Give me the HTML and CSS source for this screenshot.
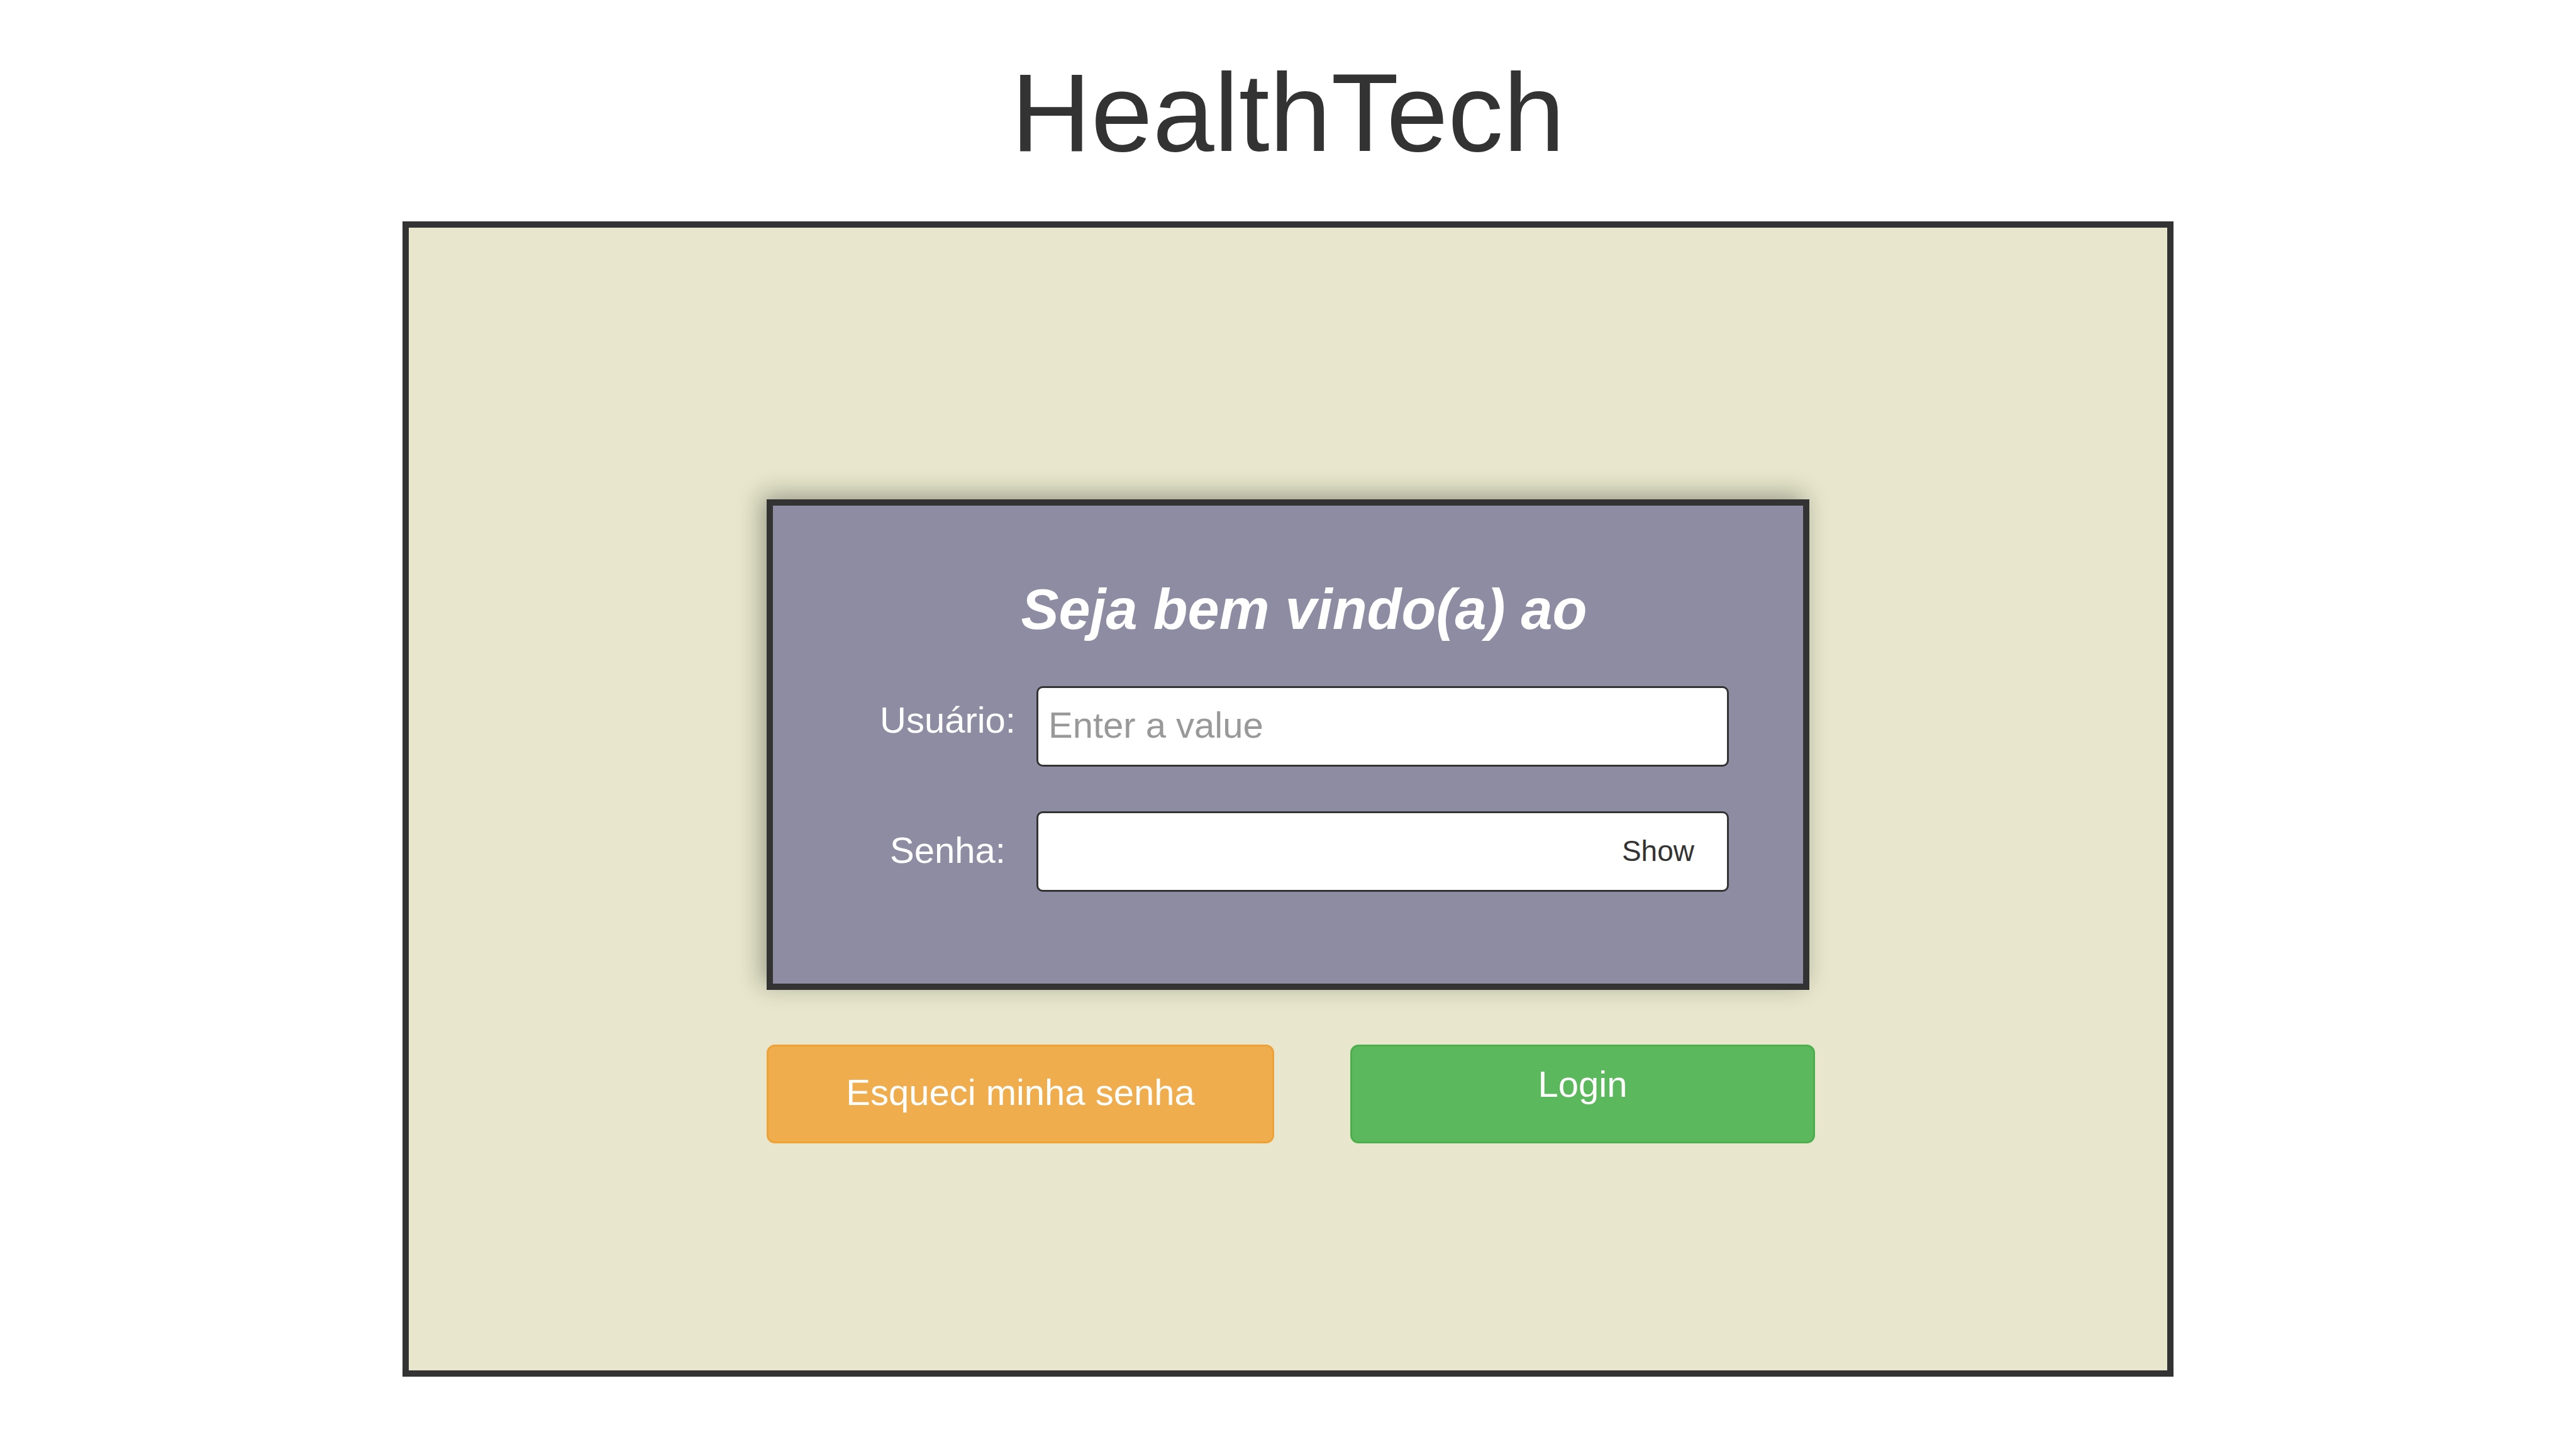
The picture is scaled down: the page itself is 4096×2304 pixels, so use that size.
FILE: index.html
```html
<!DOCTYPE html>
<html lang="pt-BR">
<head>
<meta charset="utf-8">
<meta name="viewport" content="width=device-width, initial-scale=1">
<title>HealthTech</title>
<link rel="stylesheet" href="styles.css">
</head>
<body>
<h1 class="brand">HealthTech</h1>
<main class="stage">
  <form class="login">
    <section class="card">
      <h2 class="welcome">Seja bem vindo(a) ao</h2>
      <div class="fields">
        <label class="label label-raised" for="user">Usuário:</label>
        <div class="field"><input class="input" id="user" type="text" placeholder="Enter a value"></div>
        <label class="label" for="password">Senha:</label>
        <div class="field">
          <input class="input" id="password" type="password">
          <button class="show" type="button">Show</button>
        </div>
      </div>
    </section>
    <div class="actions">
      <button class="button button-warning" type="button">Esqueci minha senha</button>
      <button class="button button-success" type="submit">Login</button>
    </div>
  </form>
</main>
</body>
</html>
```

FILE: styles.css
```css
* {
  box-sizing: border-box;
}

body {
  margin: 0;
  padding: 79px 0 115px;
  background: #fff;
  color: #333;
  font-family: "Liberation Sans", Arial, sans-serif;
  font-size: 58px;
}

.brand {
  margin: 0 0 73px;
  font-size: 176px;
  font-weight: 400;
  line-height: 200px;
  text-align: center;
}

.stage {
  display: flex;
  justify-content: center;
  width: 68.75%;
  margin: 0 auto;
  padding: 432px 0 361px;
  border: 10px solid #333;
  background: #e8e7cd;
}

.login {
  width: 1658px;
  max-width: 100%;
}

.card {
  padding: 113px 118px 146px 137px;
  border: 10px solid #333;
  background: #8e8ca2;
  box-shadow: -8px -8px 36px rgba(0, 0, 0, 0.33);
}

.welcome {
  margin: 0 0 70px;
  padding-left: 32px;
  color: #fff;
  font-size: 90px;
  font-style: italic;
  font-weight: 700;
  line-height: 104px;
  text-align: center;
}

.fields {
  display: grid;
  grid-template-columns: 282px 1fr;
  row-gap: 71px;
}

.label {
  align-self: center;
  padding-bottom: 4px;
  color: #fff;
  line-height: 66px;
  text-align: center;
}

.label-raised {
  padding-bottom: 20px;
}

.field {
  display: flex;
  align-items: center;
  height: 128px;
  border: 3px solid #333;
  border-radius: 10px;
  background: #fff;
  overflow: hidden;
}

.input {
  flex: 1;
  min-width: 0;
  height: 100%;
  padding: 0 16px 6px;
  border: 0;
  outline: 0;
  background: none;
  color: #333;
  font: inherit;
}

.input::placeholder {
  color: #999;
  opacity: 1;
}

.show {
  padding: 0 52px 2px 16px;
  border: 0;
  background: none;
  color: #333;
  font-family: inherit;
  font-size: 46px;
  line-height: 52px;
}

.actions {
  display: grid;
  grid-template-columns: 807fr 739fr;
  column-gap: 121px;
  margin: 87px -9px 0 0;
}

.button {
  height: 157px;
  padding: 0 0 6px;
  border: 3px solid;
  border-radius: 13px;
  color: #fff;
  font-family: inherit;
  font-size: 58px;
  line-height: 66px;
}

.button-warning {
  border-color: #eea236;
  background: #f0ad4e;
}

.button-success {
  padding-bottom: 32px;
  border-color: #4cae4c;
  background: #5cb85c;
}
```
